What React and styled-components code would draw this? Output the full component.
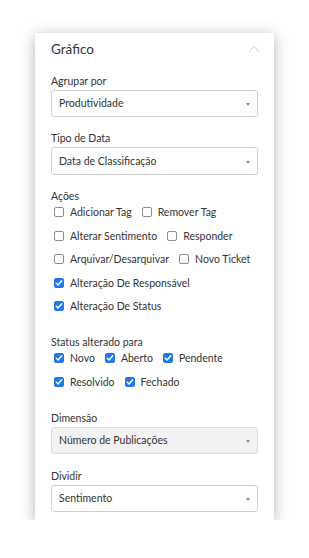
import React from "react";
import styled, { createGlobalStyle } from "styled-components";

const Global = createGlobalStyle`
  html, body { margin: 0; padding: 0; background: #fff; }
  body { font-family: Lato, "Noto Sans", sans-serif; -webkit-font-smoothing: antialiased; }
  * { box-sizing: border-box; }
`;

const Card = styled.section`
  width: 239px;
  margin: 33px auto 0;
  padding: 7px 16px 8.5px;
  background: #fff;
  box-shadow: 0 3px 14px rgba(0, 0, 0, 0.3);
  display: flex;
  flex-direction: column;
`;

const Header = styled.header`
  height: 18px;
  display: flex;
  align-items: center;
  justify-content: space-between;
  margin-bottom: 15.7px;
`;

const Title = styled.h2`
  margin: 0;
  font-size: 13.5px;
  line-height: 18px;
  font-weight: 400;
  color: #333;
`;

const Chevron = styled.svg`
  width: 12px;
  height: 8px;
  margin-right: -2px;
`;

const Field = styled.div`
  display: flex;
  flex-direction: column;
  margin-bottom: ${(p) => p.$gap}px;
`;

const Label = styled.div`
  font-size: 10.5px;
  line-height: 14px;
  color: #333;
  margin-bottom: 2px;
`;

const SelectBox = styled.div`
  height: 27.3px;
  border: 1px solid ${(p) => (p.$disabled ? "#dcdcdc" : "#cfcfcf")};
  border-radius: 3px;
  background: ${(p) => (p.$disabled ? "#f2f2f2" : "#fff")};
  padding: 0 7px 0 7px;
  display: flex;
  align-items: center;
  justify-content: space-between;
  font-size: 10.5px;
  color: #333;
`;

const Arrow = styled.span`
  width: 0;
  height: 0;
  border-left: 2.5px solid transparent;
  border-right: 2.5px solid transparent;
  border-top: 3.5px solid #8a8a8a;
  margin-top: 2px;
`;

const Checks = styled.div`
  display: flex;
  flex-wrap: wrap;
  column-gap: 10px;
  row-gap: 9.5px;
  padding-left: 3px;
`;

const CheckItem = styled.label`
  display: flex;
  align-items: center;
  gap: 6px;
  height: 14px;
  font-size: 10.5px;
  line-height: 14px;
  color: #333;
  white-space: nowrap;
`;

const Box = styled.span`
  width: 10px;
  height: 10px;
  border-radius: 2px;
  border: 1px solid ${(p) => (p.$on ? "#1f7ae6" : "#8c8c8c")};
  background: ${(p) => (p.$on ? "#1f7ae6" : "#fff")};
  display: flex;
  align-items: center;
  justify-content: center;
`;

const Select = ({ value, disabled }) => (
  <SelectBox $disabled={disabled}>
    <span>{value}</span>
    <Arrow />
  </SelectBox>
);

const Check = ({ label, on }) => (
  <CheckItem>
    <Box $on={on}>
      {on && (
        <svg width="8" height="8" viewBox="0 0 8 8">
          <path d="M1.3 4.2 L3.1 6 L6.7 1.8" fill="none" stroke="#fff" strokeWidth="1.5" strokeLinecap="round" strokeLinejoin="round" />
        </svg>
      )}
    </Box>
    {label}
  </CheckItem>
);

const actions = [
  ["Adicionar Tag", false],
  ["Remover Tag", false],
  ["Alterar Sentimento", false],
  ["Responder", false],
  ["Arquivar/Desarquivar", false],
  ["Novo Ticket", false],
  ["Alteração De Responsável", true],
  ["Alteração De Status", true],
];

const statuses = [
  ["Novo", true],
  ["Aberto", true],
  ["Pendente", true],
  ["Resolvido", true],
  ["Fechado", true],
];

export default function App() {
  return (
    <>
      <Global />
      <Card>
        <Header>
          <Title>Gráfico</Title>
          <Chevron viewBox="0 0 12 8">
            <path d="M1 6.5 L6 1.5 L11 6.5" fill="none" stroke="#d9e0e7" strokeWidth="1.2" />
          </Chevron>
        </Header>

        <Field $gap={14.5}>
          <Label>Agrupar por</Label>
          <Select value="Produtividade" />
        </Field>

        <Field $gap={14.5}>
          <Label>Tipo de Data</Label>
          <Select value="Data de Classificação" />
        </Field>

        <Field $gap={22}>
          <Label>Ações</Label>
          <Checks>
            {actions.map(([l, on]) => (
              <Check key={l} label={l} on={on} />
            ))}
          </Checks>
        </Field>

        <Field $gap={22}>
          <Label>Status alterado para</Label>
          <Checks>
            {statuses.map(([l, on]) => (
              <Check key={l} label={l} on={on} />
            ))}
          </Checks>
        </Field>

        <Field $gap={14.5}>
          <Label>Dimensão</Label>
          <Select value="Número de Publicações" disabled />
        </Field>

        <Field $gap={0}>
          <Label>Dividir</Label>
          <Select value="Sentimento" />
        </Field>
      </Card>
    </>
  );
}
